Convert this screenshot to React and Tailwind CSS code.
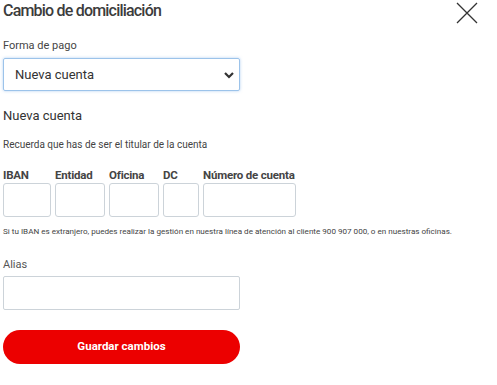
import React from "react";

const Field = ({ label, width }) => (
  <div className="flex flex-col">
    <span className="text-[11.5px] font-bold text-[#444] leading-[13px] mb-[1px] tracking-[-0.2px]">{label}</span>
    <input className={`${width} h-[34px] border border-[#ccd3d9] rounded-[3px] bg-white`} />
  </div>
);

export default function App() {
  return (
    <div className="w-[497px] h-[385px] bg-white font-['Roboto',sans-serif] text-[#444] px-[3px] pt-[1px] relative">
      <div className="flex items-start justify-between">
        <h1 className="text-[16px] font-medium leading-[20px] text-[#3c3c3c] tracking-[-0.8px]">Cambio de domiciliación</h1>
        <button className="mr-[16px] mt-[1px]">
          <svg width="22" height="22" viewBox="0 0 22 22" fill="none" stroke="#333" strokeWidth="1.3">
            <path d="M1 1 L21 21 M21 1 L1 21" />
          </svg>
        </button>
      </div>

      <div className="mt-[15px] text-[11px] leading-[14px] text-[#444]">Forma de pago</div>
      <div className="mt-[5px] w-[237px] h-[33px] border border-[#9cc3ea] rounded-[2px] shadow-[0_0_3px_rgba(100,160,230,0.5)] flex items-center justify-between pl-[11px] pr-[3px]">
        <span className="text-[13px] text-[#333]">Nueva cuenta</span>
        <svg width="14" height="14" viewBox="0 0 14 14" fill="none" stroke="#333" strokeWidth="2.2">
          <path d="M3 5 L7 9 L11 5" />
        </svg>
      </div>

      <h2 className="mt-[17px] text-[13px] font-normal leading-[16px] text-[#333]">Nueva cuenta</h2>
      <p className="mt-[14px] text-[10px] leading-[13px] text-[#444]">Recuerda que has de ser el titular de la cuenta</p>

      <div className="mt-[18px] flex gap-[4px]">
        <Field label="IBAN" width="w-[48px]" />
        <Field label="Entidad" width="w-[50px]" />
        <Field label="Oficina" width="w-[50px]" />
        <Field label="DC" width="w-[36px]" />
        <Field label="Número de cuenta" width="w-[93px]" />
      </div>

      <p className="mt-[9px] text-[8.1px] leading-[10px] text-[#444] whitespace-nowrap">
        Si tu IBAN es extranjero, puedes realizar la gestión en nuestra línea de atención al cliente 900 907 000, o en nuestras oficinas.
      </p>

      <div className="mt-[22px] text-[11px] leading-[13px] text-[#555]">Alias</div>
      <input className="mt-[5px] block w-[237px] h-[34px] border border-[#ccd3d9] rounded-[2px]" />

      <button className="mt-[20px] w-[237px] h-[34px] rounded-full bg-[#ec0000] text-white text-[11.5px] font-bold">
        Guardar cambios
      </button>
    </div>
  );
}
